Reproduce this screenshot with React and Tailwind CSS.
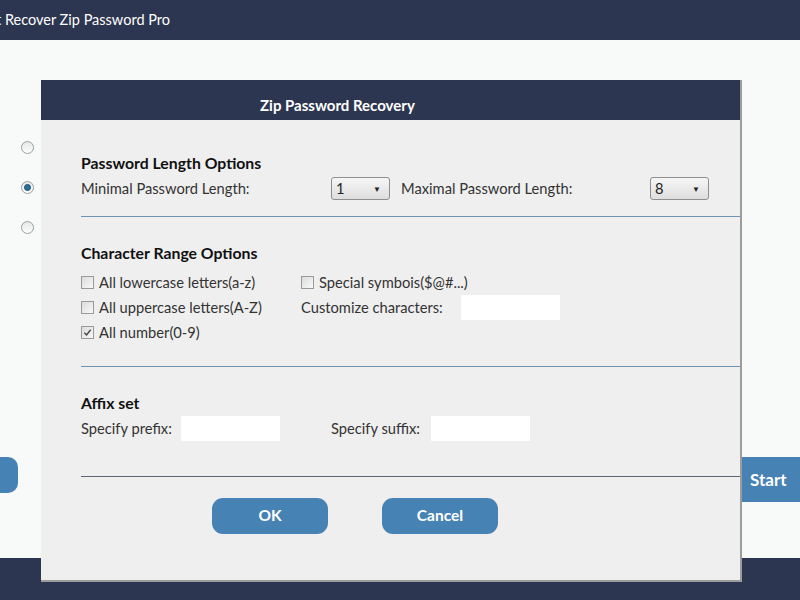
import React from 'react';

const font = { fontFamily: 'Lato, "Open Sans", sans-serif' };

const Radio = ({ checked }) => (
  <span className="flex w-[13px] h-[13px] items-center justify-center rounded-full border border-[#9aa0a6] bg-gradient-to-b from-[#e6e6e6] to-[#fdfdfd]">
    {checked && <span className="w-[7px] h-[7px] rounded-full bg-[#2b6f99] border border-[#1d4f70]" />}
  </span>
);

const Check = ({ checked, label }) => (
  <label className="flex items-center h-[25px] text-[14.7px] text-[#333]">
    <span className="flex w-[13px] h-[13px] items-center justify-center border border-[#9a9a9a] bg-gradient-to-br from-[#dcdcdc] to-[#f8f8f8] mr-[5px]">
      {checked && (
        <svg viewBox="0 0 10 10" className="w-[9px] h-[9px]">
          <path d="M1.5 5.2 L4 7.6 L8.5 2" fill="none" stroke="#4a4a4a" strokeWidth="1.6" />
        </svg>
      )}
    </span>
    {label}
  </label>
);

const Select = ({ value }) => (
  <div className="flex items-center justify-between w-[59px] h-[23px] rounded-[3px] border border-[#8e8e8e] bg-gradient-to-b from-[#f6f6f6] to-[#dedede] pl-[4px] pr-[8px] text-[14.7px] text-[#222]">
    <span>{value}</span>
    <span className="text-[8px] text-[#222]">▼</span>
  </div>
);

const Field = ({ w }) => <div className={`${w} h-[25px] bg-white`} />;

export default function App() {
  return (
    <div className="w-[800px] h-[600px] flex flex-col overflow-hidden bg-[#f8f9f9]" style={font}>
      <div className="h-10 bg-[#2d3650] flex items-center text-white text-[14.5px] -ml-[4px]">
        t Recover Zip Password Pro
      </div>

      <div className="relative flex-1">
        <div className="flex flex-col gap-[27px] pl-[21px] pt-[101px]">
          <Radio />
          <Radio checked />
          <Radio />
        </div>
        <div className="flex justify-between items-start mt-[223px]">
          <div className="w-[18px] h-[36px] rounded-r-[10px] bg-[#4682b4]" />
          <div className="w-[60px] h-[45px] bg-[#4682b4] text-white font-bold text-[17px] flex items-center pl-[10px]">
            Start
          </div>
        </div>

        <div className="absolute left-[41px] top-[40px] w-[701px] h-[502px] flex flex-col bg-[#efefef] border-r-2 border-b-2 border-[#9c9c9c]">
          <div className="h-10 bg-[#2d3650] flex items-center pl-[219px] pt-[10px] text-white font-bold text-[15px]">
            Zip Password Recovery
          </div>

          <div className="flex flex-col text-[14.7px] text-[#333]">
            <div className="pl-[40px] pt-[33px]">
              <div className="font-bold text-[#111] text-[15.8px] leading-[20px]">Password Length Options</div>
              <div className="flex items-center mt-[4px] h-[23px]">
                <span className="w-[250px]">Minimal Password Length:</span>
                <Select value="1" />
                <span className="ml-[11px] w-[249px]">Maximal Password Length:</span>
                <Select value="8" />
              </div>
            </div>
            <div className="ml-[40px] mt-[16px] h-px bg-[#6f93b3]" />

            <div className="pl-[40px] pt-[26px]">
              <div className="font-bold text-[#111] text-[15.8px] leading-[20px]">Character Range Options</div>
              <div className="flex mt-[7px]">
                <div className="flex flex-col w-[220px]">
                  <Check label="All lowercase letters(a-z)" />
                  <Check label="All uppercase letters(A-Z)" />
                  <Check checked label="All number(0-9)" />
                </div>
                <div className="flex flex-col">
                  <Check label="Special symbois($@#...)" />
                  <div className="flex items-center h-[25px]">
                    <span className="w-[160px]">Customize characters:</span>
                    <Field w="w-[99px]" />
                  </div>
                </div>
              </div>
            </div>
            <div className="ml-[40px] mt-[21px] h-px bg-[#6f93b3]" />

            <div className="pl-[40px] pt-[26px]">
              <div className="font-bold text-[#111] text-[15.8px] leading-[20px]">Affix set</div>
              <div className="flex items-center mt-[3px] h-[25px]">
                <span className="w-[100px]">Specify prefix:</span>
                <Field w="w-[99px]" />
                <span className="ml-[51px] w-[100px]">Specify suffix:</span>
                <Field w="w-[99px]" />
              </div>
            </div>
            <div className="ml-[40px] mt-[35px] h-px bg-[#5e646b]" />

            <div className="flex gap-[54px] pl-[171px] mt-[21px]">
              <button className="w-[116px] h-[36px] rounded-[11px] bg-[#4682b4] text-white font-bold text-[15.5px]">OK</button>
              <button className="w-[116px] h-[36px] rounded-[11px] bg-[#4682b4] text-white font-bold text-[15.5px]">Cancel</button>
            </div>
          </div>
        </div>
      </div>

      <div className="h-[42px] bg-[#2d3650]" />
    </div>
  );
}
